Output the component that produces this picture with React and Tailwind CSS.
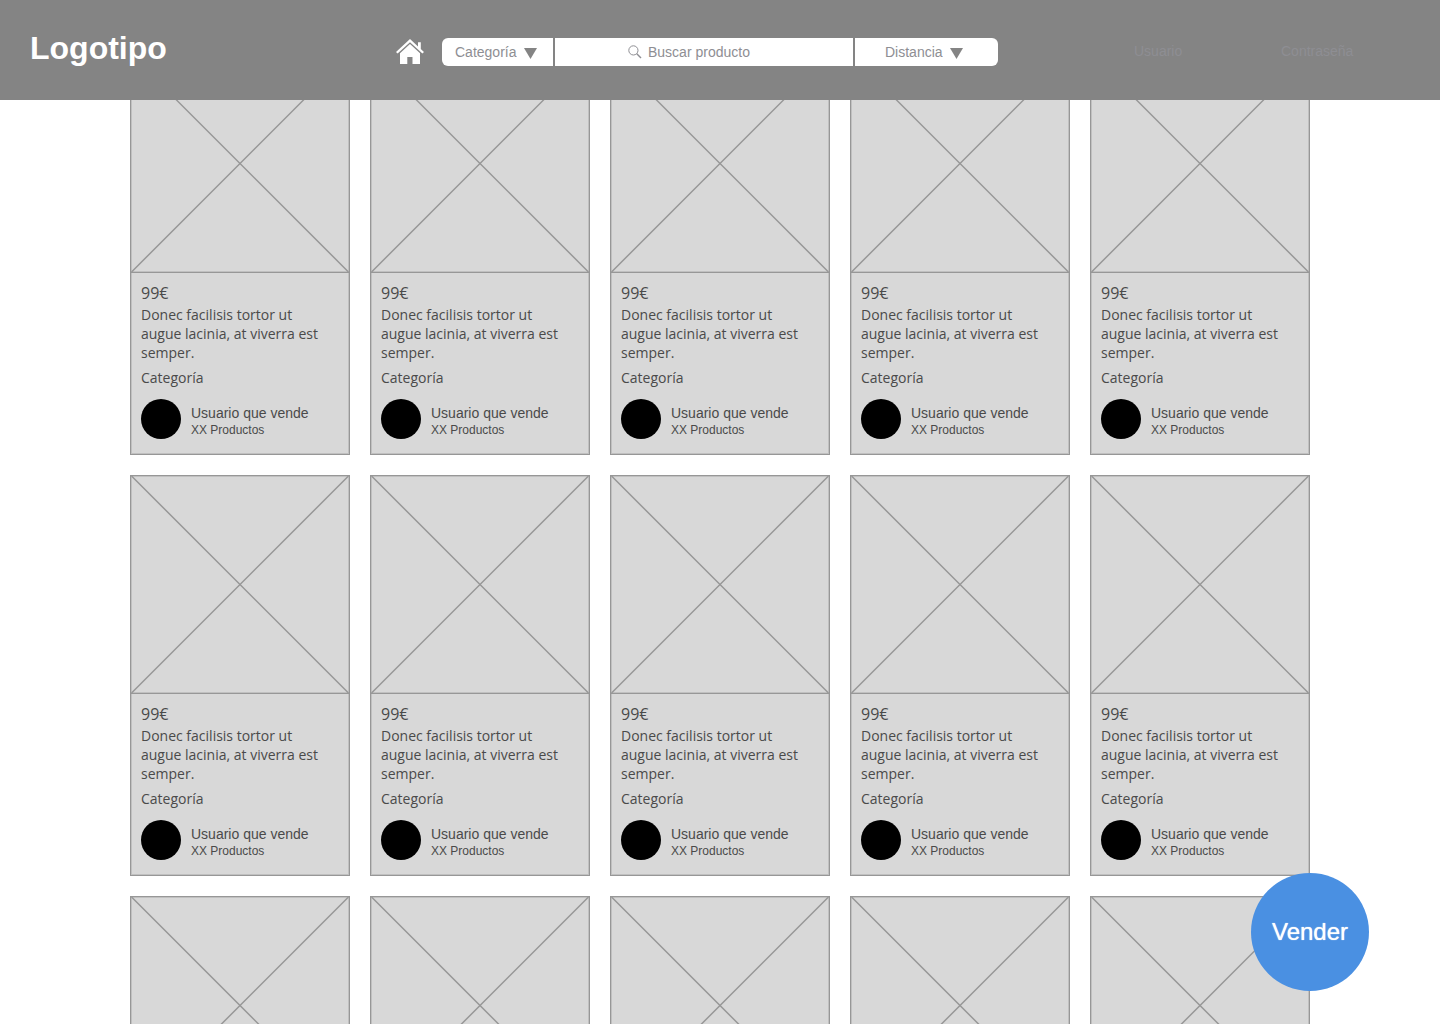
const products = Array.from({ length: 15 }, (_, id) => ({
  id,
  price: "99€",
  description: "Donec facilisis tortor ut augue lacinia, at viverra est semper.",
  category: "Categoría",
  seller: "Usuario que vende",
  count: "XX Productos",
}));

function HomeIcon() {
  return (
    <svg viewBox="0 0 28 26" className="h-[26px] w-7 fill-white" aria-hidden="true">
      <path d="M14 0 L0 13 L1.6 14.6 L14 3.3 L26.4 14.6 L28 13 L24.8 10 V3.2 H22 V7.4 Z" />
      <path d="M14 5 L4 14.2 V25 H11.3 V18 H16.5 V25 H24 V14.2 Z" />
    </svg>
  );
}

function SearchIcon() {
  return (
    <svg viewBox="0 0 14 14" className="size-3.5 shrink-0" fill="none" stroke="#8e8e93" aria-hidden="true">
      <circle cx="5.4" cy="5.4" r="4.6" />
      <path d="M8.8 8.8 L13 13" strokeWidth="1.4" />
    </svg>
  );
}

function Caret() {
  return (
    <svg viewBox="0 0 13 11" className="pointer-events-none -ml-5 mt-0.5 h-[11px] w-[13px] shrink-0 fill-[#848484]" aria-hidden="true">
      <path d="M0 0 H13 L6.5 11 Z" />
    </svg>
  );
}

function Filter({ label, className }) {
  return (
    <div className={`flex items-center bg-white ${className}`}>
      <select
        aria-label={label}
        className="h-7 appearance-none bg-transparent pr-[27px] text-sm text-[#8e8e93] outline-none"
      >
        <option>{label}</option>
      </select>
      <Caret />
    </div>
  );
}

function Header() {
  return (
    <header className="fixed inset-x-0 top-0 z-10 flex h-[100px] items-center bg-[#848484]">
      <h1 className="ml-[30px] w-[366px] pb-1 text-[32px] leading-9 font-bold text-white">Logotipo</h1>
      <a href="#inicio" aria-label="Inicio" className="mt-1">
        <HomeIcon />
      </a>
      <form className="mt-1 ml-[18px] flex w-[556px] gap-0.5 overflow-hidden rounded-md">
        <Filter label="Categoría" className="w-[111px] pl-[13px]" />
        <label className="flex flex-1 items-center gap-1.5 bg-white pl-[73px]">
          <SearchIcon />
          <input
            type="search"
            aria-label="Buscar producto"
            placeholder="Buscar producto"
            className="h-7 w-full min-w-0 bg-transparent text-sm text-[#8e8e93] outline-none placeholder:text-[#8e8e93]"
          />
        </label>
        <Filter label="Distancia" className="w-[143px] pl-[30px]" />
      </form>
      <form className="mr-[30px] ml-auto flex gap-[47px] pt-0.5">
        <input
          type="text"
          aria-label="Usuario"
          placeholder="Usuario"
          className="h-7 w-[100px] bg-transparent text-sm text-[#8e8e93] outline-none placeholder:text-[#8e8e93]"
        />
        <input
          type="password"
          aria-label="Contraseña"
          placeholder="Contraseña"
          className="h-7 w-[129px] bg-transparent text-sm text-[#8e8e93] outline-none placeholder:text-[#8e8e93]"
        />
      </form>
    </header>
  );
}

function ProductCard({ product }) {
  return (
    <article className="border border-[#979797] bg-[#d8d8d8] pb-[15px] text-[#4a4a4a] shadow-[inset_0_0_0_1px_#c0c0c0]">
      <svg
        viewBox="0 0 218 218"
        className="block aspect-square w-full border-b border-[#979797] shadow-[inset_0_-1px_0_#c0c0c0]"
        stroke="#979797"
        strokeWidth="1.5"
        aria-hidden="true"
      >
        <path d="M0 0 L218 218 M218 0 L0 218" />
      </svg>
      <div className="pt-2 pr-5 pl-2.5 font-['Open_Sans',sans-serif]">
        <p className="text-base leading-6">{product.price}</p>
        <p className="text-sm leading-[19px]">{product.description}</p>
        <p className="mt-1.5 text-sm leading-[19px]">{product.category}</p>
      </div>
      <div className="mt-3 flex items-center gap-2.5 px-2.5">
        <div className="size-10 rounded-full bg-black" />
        <div className="pt-1">
          <p className="text-sm leading-[18px]">{product.seller}</p>
          <p className="text-xs leading-4">{product.count}</p>
        </div>
      </div>
    </article>
  );
}

export default function App() {
  return (
    <div className="min-h-screen bg-white font-['Liberation_Sans',Arial,sans-serif]">
      <Header />
      <main className="mx-auto grid max-w-[1180px] grid-cols-5 gap-5 pt-[54px]">
        {products.map((product) => (
          <ProductCard key={product.id} product={product} />
        ))}
      </main>
      <button
        type="button"
        className="fixed right-[71px] bottom-[33px] size-[118px] rounded-full bg-[#4a90e2] text-2xl text-white [text-shadow:0_0_1px_#fff]"
      >
        Vender
      </button>
    </div>
  );
}
